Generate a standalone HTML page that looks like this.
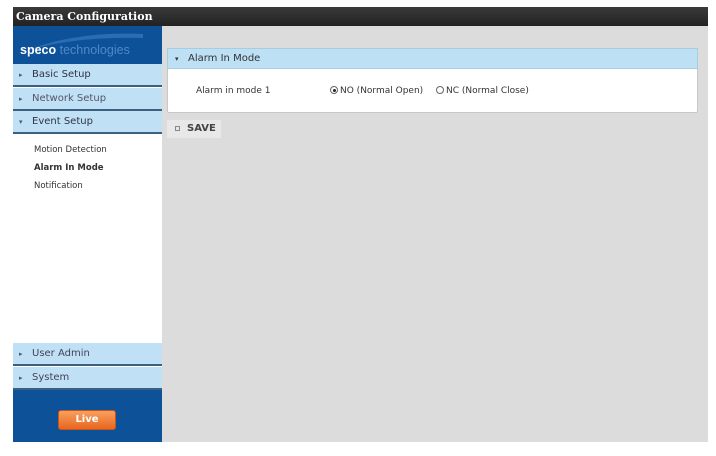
<!DOCTYPE html>
<html><head><meta charset="utf-8"><style>
*{margin:0;padding:0;box-sizing:border-box}
body{width:716px;height:456px;background:#fff;position:relative;overflow:hidden;font-family:"DejaVu Sans","Liberation Sans",sans-serif;color:#333}
.abs{position:absolute}
#title{left:13px;top:7px;width:695px;height:19px;background:linear-gradient(#3a3a3a,#222);color:#fff;font-family:"DejaVu Serif","Liberation Serif",serif;font-weight:bold;font-size:11px;line-height:19px;padding-left:3px}
#side{left:13px;top:26px;width:149px;height:416px;background:#fff}
#main{left:162px;top:26px;width:546px;height:416px;background:#dcdcdc}
.logo{left:13px;top:26px;width:149px;height:38px;background:#0d5299}
.menu{position:absolute;left:13px;width:149px;height:23px;background:#bfe0f5;border-bottom:2px solid #3d5f80;font-size:10px;line-height:22px;padding-left:19px;color:#334}
.menu span{position:absolute;left:6px;font-size:7px;color:#556}
.sub{position:absolute;font-size:8.5px;color:#333}
.bot{left:13px;top:390px;width:149px;height:52px;background:#0d5299}
.live{left:58px;top:410px;width:58px;height:20px;border-radius:3px;background:linear-gradient(#f8a060,#e8661e);border:1px solid #c85418;color:#fff;font-size:10px;font-weight:bold;text-align:center;line-height:18px}
#panel{left:167px;top:48px;width:531px;height:65px;background:#fff;border:1px solid #c8c8c8;border-radius:2px}
#ph{left:167px;top:48px;width:531px;height:21px;background:#bde0f5;border:1px solid #a8cce0;font-size:10px;line-height:20px;padding-left:20px;color:#333}
.t{position:absolute;font-size:9px;color:#333}
.radio{display:inline-block;width:8px;height:8px;border:1px solid #666;border-radius:50%;vertical-align:-1px;margin-right:2px;position:relative;background:#fff}
.save{left:167px;top:120px;width:54px;height:18px;background:#e8e8e8;font-weight:bold;font-size:10px;line-height:18px;padding-left:20px;color:#444}
</style></head><body>
<div id="side" class="abs"></div>
<div id="main" class="abs"></div>
<div id="title" class="abs">Camera Configuration</div>
<div class="logo abs">
<svg width="149" height="38" style="position:absolute;left:0;top:0"><path d="M10 26 Q60 5 130 8 L130 12 Q60 10 10 26Z" fill="#3a78c0" opacity=".7"/></svg>
<div class="abs" style="left:7px;top:17px;font-size:12.5px;color:#fff;font-family:'Liberation Sans',sans-serif"><b>speco</b> <span style="color:#4d88c8">technologies</span></div>
</div>
<div class="menu" style="top:64px"><span>▸</span>Basic Setup</div>
<div class="menu" style="top:88px;color:#556"><span>▸</span>Network Setup</div>
<div class="menu" style="top:111px"><span>▾</span>Event Setup</div>
<div class="sub" style="top:145px;left:34px">Motion Detection</div>
<div class="sub" style="top:163px;left:34px;font-weight:bold">Alarm In Mode</div>
<div class="sub" style="top:181px;left:34px">Notification</div>
<div class="bot abs"></div>
<div class="menu" style="top:343px;color:#445"><span>▸</span>User Admin</div>
<div class="menu" style="top:367px;color:#445"><span>▸</span>System</div>
<div class="live abs">Live</div>
<div id="panel" class="abs"></div>
<div id="ph" class="abs"><span style="position:absolute;left:7px;font-size:7px">▾</span>Alarm In Mode</div>
<div class="t" style="left:196px;top:86px">Alarm in mode 1</div>
<div class="t" style="left:330px;top:86px"><span class="radio"><span style="position:absolute;left:1.5px;top:1.5px;width:3px;height:3px;border-radius:50%;background:#222"></span></span>NO (Normal Open)</div>
<div class="t" style="left:436px;top:86px"><span class="radio"></span>NC (Normal Close)</div>
<div class="save abs"><span style="position:absolute;left:8px;top:6px;width:5px;height:5px;border:1px solid #888"></span>SAVE</div>
</body></html>
